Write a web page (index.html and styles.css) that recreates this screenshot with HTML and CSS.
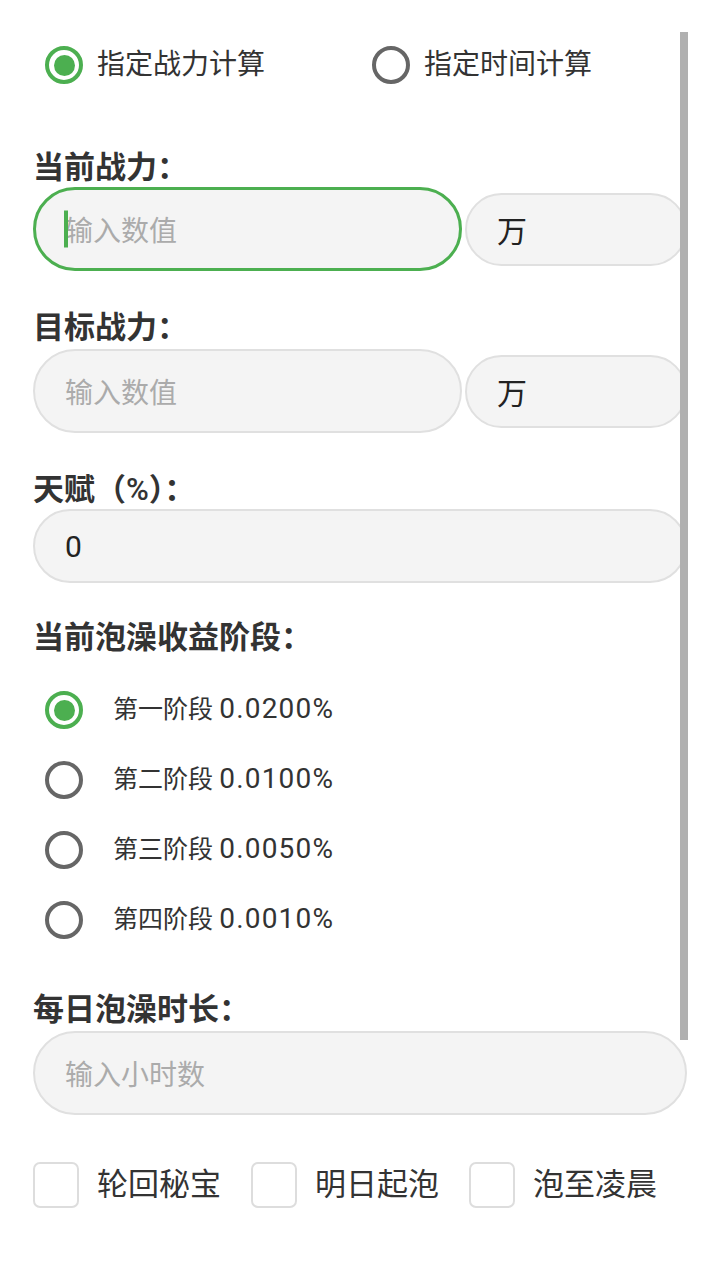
FILE: index.html
```html
<!DOCTYPE html>
<html lang="zh-CN">
<head>
<meta charset="utf-8">
<title>泡澡计算</title>
<link rel="stylesheet" href="styles.css">
</head>
<body>
<div class="page">
  <div class="mode-row">
    <div class="mode-item first"><span class="radio on"></span><span>指定战力计算</span></div>
    <div class="mode-item"><span class="radio"></span><span>指定时间计算</span></div>
  </div>

  <div class="label l1">当前战力<span class="colon">：</span></div>
  <div class="field-row r1">
    <div class="field focused"><span class="caret"></span><span class="ph">输入数值</span></div>
    <div class="unit">万</div>
  </div>

  <div class="label l2">目标战力<span class="colon">：</span></div>
  <div class="field-row r2">
    <div class="field"><span class="ph">输入数值</span></div>
    <div class="unit">万</div>
  </div>

  <div class="label l3">天赋（<span class="pct">%</span>）<span class="colon">：</span></div>
  <div class="field full short"><span class="val">0</span></div>

  <div class="label l4">当前泡澡收益阶段<span class="colon">：</span></div>
  <div class="stages">
    <div class="stage"><span class="radio on"></span><span class="stage-text">第一阶段 <span class="rate">0.0200%</span></span></div>
    <div class="stage"><span class="radio"></span><span class="stage-text">第二阶段 <span class="rate">0.0100%</span></span></div>
    <div class="stage"><span class="radio"></span><span class="stage-text">第三阶段 <span class="rate">0.0050%</span></span></div>
    <div class="stage"><span class="radio"></span><span class="stage-text">第四阶段 <span class="rate">0.0010%</span></span></div>
  </div>

  <div class="label l5">每日泡澡时长<span class="colon">：</span></div>
  <div class="field full r5"><span class="ph">输入小时数</span></div>

  <div class="checks">
    <div class="check-item"><span class="box"></span><span class="check-text">轮回秘宝</span></div>
    <div class="check-item"><span class="box"></span><span class="check-text">明日起泡</span></div>
    <div class="check-item"><span class="box"></span><span class="check-text">泡至凌晨</span></div>
  </div>
</div>
<div class="scrollbar"></div>
</body>
</html>
```

FILE: styles.css
```css
html, body {
  margin: 0;
  padding: 0;
  background: #ffffff;
}

body {
  font-family: Roboto, "Noto Sans CJK SC", sans-serif;
  color: #333333;
  width: 720px;
  height: 1280px;
  position: relative;
  overflow: hidden;
}

.page {
  padding: 0 33px;
}

/* top mode radios */
.mode-row {
  display: flex;
  align-items: center;
  height: 50px;
  margin-top: 40px;
  padding-left: 12px;
}

.mode-item {
  display: flex;
  align-items: center;
  gap: 14px;
  font-size: 28px;
  line-height: 36px;
  color: #333333;
}

.mode-item.first {
  width: 327px;
}

.radio {
  flex: none;
  width: 38px;
  height: 38px;
  box-sizing: border-box;
  border: 4px solid #666666;
  border-radius: 50%;
  display: flex;
  align-items: center;
  justify-content: center;
}

.radio.on {
  border-color: #4caf50;
}

.radio.on::after {
  content: "";
  width: 21px;
  height: 21px;
  border-radius: 50%;
  background: #4caf50;
}

/* labels */
.label {
  height: 36px;
  font-size: 31px;
  font-weight: bold;
  line-height: 36px;
  color: #333333;
  white-space: nowrap;
}

.colon {
  font-family: "Noto Sans CJK TC", "Noto Sans CJK SC", sans-serif;
  line-height: 1;
}

.pct {
  font-weight: 500;
  line-height: 1;
}

.l1 { margin-top: 59px; }
.l2 { margin-top: 38px; }
.l3 { margin-top: 38px; }
.l4 { margin-top: 36px; }
.l5 { margin-top: 36px; }

/* fields */
.field-row {
  display: flex;
  align-items: center;
  gap: 3px;
}

.r1 { margin-top: 2px; }
.r2 { margin-top: 4px; }

.field {
  position: relative;
  flex: none;
  width: 429px;
  height: 84px;
  box-sizing: border-box;
  border: 2px solid #e0e0e0;
  border-radius: 42px;
  background: #f4f4f4;
  display: flex;
  align-items: center;
  padding-left: 30px;
  font-size: 28px;
}

.field.focused {
  border: 3px solid #4caf50;
  padding-left: 29px;
}

.field.full {
  width: 654px;
}

.field.short {
  height: 74px;
  border-radius: 37px;
  margin-top: 2px;
}

.r5 { margin-top: 4px; }

.ph {
  color: #ababab;
}

.val {
  color: #222222;
  font-size: 30px;
}

.caret {
  position: absolute;
  left: 28px;
  top: 50%;
  width: 4px;
  height: 37px;
  transform: translateY(-50%);
  background: #4caf50;
}

.unit {
  flex: none;
  width: 222px;
  height: 73px;
  box-sizing: border-box;
  border: 2px solid #e0e0e0;
  border-radius: 37px;
  background: #f4f4f4;
  display: flex;
  align-items: center;
  padding-left: 30px;
  font-size: 30px;
  color: #222222;
}

/* stages */
.stages {
  margin-top: 20px;
}

.stage {
  display: flex;
  align-items: center;
  gap: 30px;
  height: 70px;
  padding-left: 12px;
  color: #333333;
}

.stage-text {
  font-size: 25px;
  line-height: 36px;
  white-space: nowrap;
}

.rate {
  font-size: 28px;
  line-height: 1;
  letter-spacing: 1.2px;
}

/* checkboxes */
.checks {
  display: flex;
  align-items: center;
  margin-top: 47px;
}

.check-item {
  display: flex;
  align-items: center;
  margin-right: 30px;
}

.box {
  flex: none;
  width: 46px;
  height: 46px;
  box-sizing: border-box;
  border: 2px solid #dddddd;
  border-radius: 7px;
  background: #ffffff;
}

.check-text {
  margin-left: 18px;
  font-size: 31px;
  line-height: 40px;
  color: #333333;
}

.scrollbar {
  position: absolute;
  left: 680px;
  top: 32px;
  width: 8px;
  height: 1008px;
  background: #b0b0b0;
}
```
